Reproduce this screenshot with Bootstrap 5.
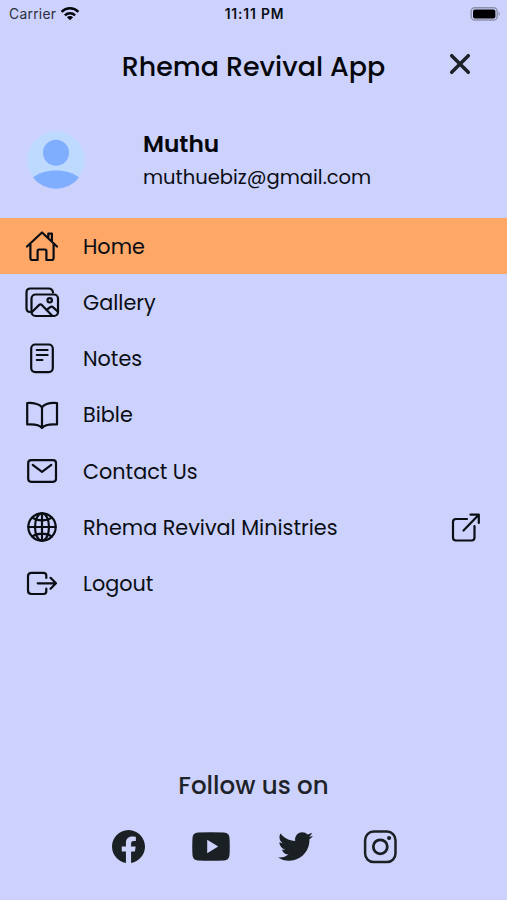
<!DOCTYPE html>
<html lang="en">
<head>
<meta charset="utf-8">
<meta name="viewport" content="width=device-width, initial-scale=1">
<title>Rhema Revival App</title>
<link href="https://cdn.jsdelivr.net/npm/bootstrap@5.3.0/dist/css/bootstrap.min.css" rel="stylesheet">
<style>
body{background:#ccd2fb;color:#0a0d14;font-family:Poppins,Inter,sans-serif;height:900px;overflow:hidden}
svg{display:block;flex:none}
.line-icon{fill:none;stroke:#0a0d14;stroke-width:2.2;stroke-linecap:round;stroke-linejoin:round}
.status-bar{height:28px;padding:0 6px 0 9px;font-family:Inter,sans-serif;font-size:13.8px;line-height:28px}
.status-bar .carrier{color:#2b2f40;letter-spacing:.3px}
.status-bar .clock{font-size:13.8px;letter-spacing:.85px;margin-right:1px}
.app-head{height:78px;padding-right:36px}
.app-title{font-size:26.9px;font-weight:500;line-height:78px;margin-left:36px;color:#05070c}
.btn-x{width:22px;height:22px;margin-top:-6px}
.profile{height:112px;padding-left:27px}
.avatar{width:58px;height:58px;margin-top:-5px}
.who{margin-left:58px;margin-top:-3px}
.who-name{font-size:23.3px;font-weight:600;line-height:33px;color:#05070c}
.who-mail{font-size:19.55px;line-height:33px}
.menu-item{height:56.2px;padding:0 23px 0 24px;font-size:20.75px;color:#0a0d14;text-decoration:none}
.menu-item.current{background:#fea767}
.menu-label{margin-left:23px;padding-top:.6px}
.follow{margin-top:auto;height:134px;color:#1e2229}
.follow-title{font-size:24.5px;font-weight:500;line-height:40px}
.socials{width:338px;height:34px;margin-top:23px}
.fb-icon{margin-left:4px}
.ig-icon{overflow:visible}
</style>
<script src="https://cdn.jsdelivr.net/npm/bootstrap@5.3.0/dist/js/bootstrap.bundle.min.js"></script>
</head>
<body class="d-flex flex-column m-0">
<div class="status-bar row g-0 align-items-center">
  <div class="col d-flex align-items-center"><span class="carrier">Carrier</span>
    <svg class="ms-1" width="20" height="15" viewBox="0 0 20 15"><g fill="none" stroke="#05070c" stroke-width="2.5"><path d="M1.6 4.800a12 12 0 0 1 16.8 0M4.900 8.300a7.400 7.400 0 0 1 10.200 0"/></g><path d="M10 13.300 6.900 10.300a4.400 4.400 0 0 1 6.200 0z" fill="#05070c"/></svg>
  </div>
  <div class="col-auto clock fw-semibold">11:11 PM</div>
  <div class="col d-flex justify-content-end">
    <svg width="31" height="15" viewBox="0 0 31 15"><rect x="1.200" y=".8" width="26" height="12.300" rx="3.600" fill="none" stroke="#8d91ac" stroke-width="1.500"/><rect x="3" y="2.400" width="22.400" height="9" rx="2" fill="#000"/><path d="M28.600 4.700c1.800.6 1.800 3.600 0 4.200z" fill="#8d91ac"/></svg>
  </div>
</div>

<header class="app-head row g-0 align-items-center">
  <div class="col"></div>
  <div class="col-auto app-title">Rhema Revival App</div>
  <div class="col d-flex justify-content-end"><svg class="btn-x" viewBox="0 0 22 22"><path d="M2.700 2.700 19.300 19.300M19.300 2.700 2.700 19.300" fill="none" stroke="#1c2228" stroke-width="3.500" stroke-linecap="round"/></svg></div>
</header>

<section class="profile d-flex align-items-center">
  <svg class="avatar" viewBox="0 0 58 58"><circle cx="29" cy="29" r="28.700" fill="#bddafe"/><circle cx="29" cy="21.800" r="13" fill="#80aeff"/><path d="M6 46.500C17 37 41 37 52 46.500A29 29 0 0 1 6 46.500z" fill="#80aeff"/></svg>
  <div class="who"><div class="who-name">Muthu</div><div class="who-mail">muthuebiz@gmail.com</div></div>
</section>

<nav class="d-flex flex-column">
  <a class="menu-item current d-flex align-items-center" href="#">
    <svg class="line-icon" width="36" height="36" viewBox="0 0 36 36"><path d="M3 18.500 18 4.500 33 18.500M6.400 16V30q0 2 2 2h5.200V23q0-1.500 1.500-1.500h5.800q1.500 0 1.500 1.500v9h5.200q2 0 2-2V16M24.300 9.500V5.700h3.600V13"/></svg>
    <span class="menu-label">Home</span></a>
  <a class="menu-item d-flex align-items-center" href="#">
    <svg class="line-icon" width="36" height="36" viewBox="0 0 36 36"><path d="M6 28q-3.500 0-3.500-4V8.500q0-4 4-4h18q4 0 4.500 4"/><rect x="7.500" y="10.500" width="26.500" height="21.500" rx="4"/><circle cx="25.700" cy="16.300" r="2.200"/><path d="M8 28 15.200 20.900q1.300-1.200 2.600 0L28 31.500M22.500 26 26.200 23.200q1.500-1 3 .2L34 27.700"/></svg>
    <span class="menu-label">Gallery</span></a>
  <a class="menu-item d-flex align-items-center" href="#">
    <svg class="line-icon" width="36" height="36" viewBox="0 0 36 36"><rect x="7.200" y="4.500" width="21.600" height="27.600" rx="4"/><path d="M12.800 10h10.800M12.800 15h10.800M12.800 20h5.600"/></svg>
    <span class="menu-label">Notes</span></a>
  <a class="menu-item d-flex align-items-center" href="#">
    <svg class="line-icon" width="36" height="36" viewBox="0 0 36 36"><path d="M18 10.200C15.500 7 9 5.500 3.200 6V27.500C9 27 15.500 28 18 31 20.500 28 27 27 33 27.500V6C27 5.500 20.500 7 18 10.200V31"/></svg>
    <span class="menu-label">Bible</span></a>
  <a class="menu-item d-flex align-items-center" href="#">
    <svg class="line-icon" width="36" height="36" viewBox="0 0 36 36"><rect x="4.200" y="7.200" width="27.800" height="21.600" rx="3"/><path d="M8.700 11.800 18 18.800 27.300 11.800"/></svg>
    <span class="menu-label">Contact Us</span></a>
  <a class="menu-item d-flex align-items-center" href="#">
    <svg class="line-icon" width="36" height="36" viewBox="0 0 36 36"><circle cx="18" cy="18" r="13.700"/><ellipse cx="18" cy="18" rx="7" ry="13.700"/><path d="M18 4.300V31.700M4.300 18H31.700M8.300 8.600C13.500 12.200 22.500 12.200 27.700 8.600M8.300 27.400C13.500 23.800 22.500 23.800 27.700 27.400"/></svg>
    <span class="menu-label">Rhema Revival Ministries</span>
    <svg class="line-icon ms-auto" width="36" height="36" viewBox="0 0 36 36"><path d="M19 10H8q-3 0-3 3V28.500q0 3 3 3H23.500q3 0 3-3V17M15.500 21.500 30.500 6M22.500 5.700H30.800V14"/></svg></a>
  <a class="menu-item d-flex align-items-center" href="#">
    <svg class="line-icon" width="36" height="36" viewBox="0 0 36 36"><path d="M22.300 13V10.500q0-2.700-2.700-2.700H7.500Q4 7.800 4 11.300V25.500Q4 29 7.500 29H19.600q2.700 0 2.700-2.700V23.700M13.700 18.300H32M26.500 12.800 32 18.300 26.500 23.800"/></svg>
    <span class="menu-label">Logout</span></a>
</nav>

<footer class="follow d-flex flex-column align-items-center">
  <div class="follow-title">Follow us on</div>
  <div class="socials row g-0 align-items-center">
    <div class="col d-flex justify-content-center"><svg class="fb-icon" width="33" height="33" viewBox="0 0 16 16" fill="#1b2025"><path d="M16 8.049c0-4.446-3.582-8.050-8-8.050C3.580 0 0 3.603 0 8.050c0 4.017 2.926 7.347 6.750 7.951v-5.625H4.720V8.050h2.030V6.275c0-2.017 1.195-3.131 3.022-3.131.876 0 1.791.157 1.791.157v1.980h-1.009c-.993 0-1.303.621-1.303 1.258v1.510h2.218l-.354 2.326H9.250V16c3.824-.604 6.750-3.934 6.750-7.951"/></svg></div>
    <div class="col d-flex justify-content-center"><svg width="38" height="29" viewBox="0 0 38 29"><path fill-rule="evenodd" fill="#1b2025" d="M6 .6Q19-.2 32 .6 37.200.8 37.500 6 38 14.500 37.500 23 37.200 28.200 32 28.400 19 29.200 6 28.400.8 28.200.5 23 0 14.500.5 6 .8.800 6 .6zM15.200 7.800V21.200L26.200 14.500z"/></svg></div>
    <div class="col d-flex justify-content-center"><svg width="35" height="29" viewBox="1.540 4 20.920 17" fill="#1b2025"><path d="M22.460 6c-.77.350-1.600.580-2.460.690.880-.53 1.560-1.370 1.880-2.380-.83.500-1.750.850-2.720 1.050C18.370 4.500 17.260 4 16 4c-2.350 0-4.270 1.920-4.270 4.290 0 .34.040.67.110.98C8.280 9.090 5.110 7.380 3 4.790c-.37.630-.58 1.370-.58 2.150 0 1.490.75 2.810 1.910 3.560-.71 0-1.370-.2-1.950-.5v.03c0 2.080 1.480 3.820 3.440 4.210a4.220 4.220 0 0 1-1.930.07 4.280 4.280 0 0 0 4 2.980 8.521 8.521 0 0 1-5.330 1.840c-.34 0-.68-.02-1.020-.06C3.440 20.290 5.700 21 8.120 21 16 21 20.330 14.460 20.330 8.790c0-.19 0-.37-.01-.56.840-.6 1.560-1.360 2.140-2.230z"/></svg></div>
    <div class="col d-flex justify-content-center"><svg class="ig-icon" width="34" height="34" viewBox="-.3 -.8 34 34"><g fill="none" stroke="#1b2025"><rect x="1.800" y="1.800" width="30.400" height="30.400" rx="8.500" stroke-width="2.500"/><circle cx="17" cy="17" r="7" stroke-width="2.800"/></g><circle cx="25.800" cy="8.200" r="2.100" fill="#1b2025"/></svg></div>
  </div>
</footer>
</body>
</html>
